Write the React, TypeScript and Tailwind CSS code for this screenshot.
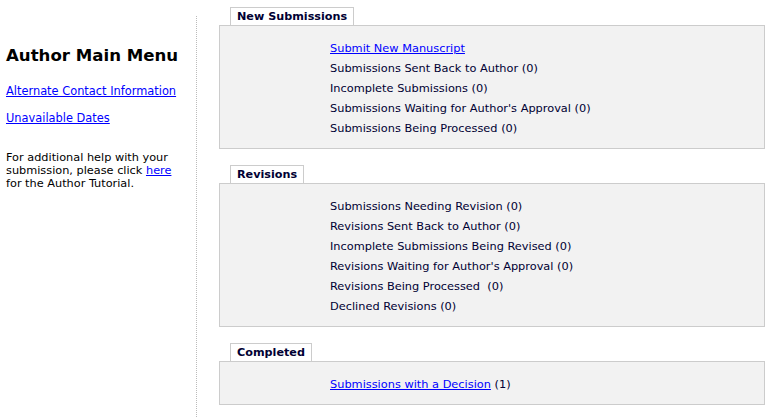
import React from 'react';

type Item = { label: string; count?: string; link?: boolean };

const sections: { title: string; items: Item[] }[] = [
  {
    title: 'New Submissions',
    items: [
      { label: 'Submit New Manuscript', link: true },
      { label: 'Submissions Sent Back to Author (0)' },
      { label: 'Incomplete Submissions (0)' },
      { label: "Submissions Waiting for Author's Approval (0)" },
      { label: 'Submissions Being Processed (0)' },
    ],
  },
  {
    title: 'Revisions',
    items: [
      { label: 'Submissions Needing Revision (0)' },
      { label: 'Revisions Sent Back to Author (0)' },
      { label: 'Incomplete Submissions Being Revised (0)' },
      { label: "Revisions Waiting for Author's Approval (0)" },
      { label: 'Revisions Being Processed \u00a0(0)' },
      { label: 'Declined Revisions (0)' },
    ],
  },
  {
    title: 'Completed',
    items: [{ label: 'Submissions with a Decision', count: ' (1)', link: true }],
  },
];

const Section: React.FC<{ title: string; items: Item[] }> = ({ title, items }) => (
  <div className="mb-[16px]">
    {/* Tab */}
    <div className="flex pl-[11px]">
      <div className="h-[18px] border-t border-l border-r border-[#cccccc] bg-white px-[6px] text-[11.2px] font-bold leading-[17px] text-[#000033]">
        {title}
      </div>
    </div>
    {/* Panel */}
    <div className="border border-[#cccccc] bg-[#f2f2f2] pt-[12px] pb-[10px] pl-[110px]">
      {items.map((item) => (
        <div key={item.label} className="text-[11.35px] leading-[20px] text-[#000033]">
          {item.link ? (
            <>
              <a href="#" className="text-[#0000ff] underline">
                {item.label}
              </a>
              {item.count}
            </>
          ) : (
            item.label
          )}
        </div>
      ))}
    </div>
  </div>
);

export default function App() {
  return (
    <div
      className="flex min-h-screen w-[776px] bg-white"
      style={{ fontFamily: '"DejaVu Sans", Verdana, sans-serif' }}
    >
      {/* Sidebar */}
      <div className="mt-[16px] w-[197px] shrink-0 border-r border-dotted border-[#bbbbbb] pl-[6px]">
        <h1 className="mt-[30px] text-[16.6px] font-bold leading-[20px] text-black">Author Main Menu</h1>
        <div className="mt-[19px] text-[11.4px] leading-[13px]">
          <a href="#" className="text-[#0000ff] underline">
            Alternate Contact Information
          </a>
        </div>
        <div className="mt-[14px] text-[11.4px] leading-[13px]">
          <a href="#" className="text-[#0000ff] underline">
            Unavailable Dates
          </a>
        </div>
        <p className="mt-[26px] pr-[10px] text-[11.3px] leading-[13px] text-black">
          For additional help with your submission, please click{' '}
          <a href="#" className="text-[#0000ff] underline">
            here
          </a>{' '}
          for the Author Tutorial.
        </p>
      </div>

      {/* Main */}
      <div className="ml-[22px] w-[546px] pt-[7px]">
        {sections.map((s) => (
          <Section key={s.title} title={s.title} items={s.items} />
        ))}
      </div>
    </div>
  );
}
